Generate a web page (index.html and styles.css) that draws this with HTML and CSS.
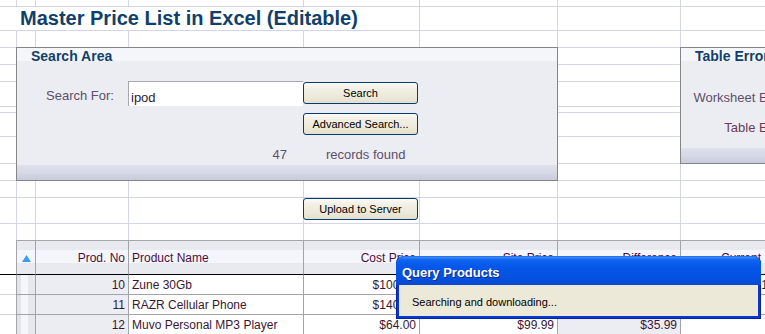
FILE: index.html
```html
<!DOCTYPE html>
<html>
<head>
<meta charset="utf-8">
<title>Master Price List</title>
<link rel="stylesheet" href="styles.css">
</head>
<body>
<div class="sheet">
  <div class="title-cell"><h1 class="title">Master Price List in Excel (Editable)</h1></div>

  <section class="panel search-panel">
    <h2 class="panel-title">Search Area</h2>
    <div class="search-grid">
      <label class="lbl" for="q">Search For:</label>
      <input id="q" class="search-input" value="ipod">
      <button class="xp-btn btn-search">Search</button>
      <button class="xp-btn btn-adv">Advanced Search...</button>
      <span class="count">47</span>
      <span class="found">records found</span>
    </div>
  </section>

  <section class="panel error-panel">
    <h2 class="panel-title">Table Errors</h2>
    <div class="err-grid">
      <span class="err-lbl err-ws">Worksheet Errors:</span>
      <span class="err-lbl err-tb">Table Errors:</span>
    </div>
  </section>

  <button class="xp-btn btn-upload">Upload to Server</button>

  <div class="table">
    <div class="th c0"></div>
    <div class="th c1"><svg class="sort" width="9" height="7" viewBox="0 0 9 7"><polygon points="4.5,0 9,7 0,7" fill="#3b9cf2"/></svg></div>
    <div class="th c2 r">Prod. No</div>
    <div class="th c3">Product Name</div>
    <div class="th c4 r">Cost Price</div>
    <div class="th c5 r">Site Price</div>
    <div class="th c6 r">Difference</div>
    <div class="th c7 r">Current</div>

    <div class="td first c0"></div>
    <div class="td first c1"></div>
    <div class="td first c2 r">10</div>
    <div class="td first c3">Zune 30Gb</div>
    <div class="td first c4 r">$100.00</div>
    <div class="td first c5 r">$149.99</div>
    <div class="td first c6 r">$49.99</div>
    <div class="td first c7 r">1</div>

    <div class="td c0"></div>
    <div class="td c1"></div>
    <div class="td c2 r">11</div>
    <div class="td c3">RAZR Cellular Phone</div>
    <div class="td c4 r">$140.00</div>
    <div class="td c5 r">$199.99</div>
    <div class="td c6 r">$59.99</div>
    <div class="td c7 r"></div>

    <div class="td c0"></div>
    <div class="td c1"></div>
    <div class="td c2 r">12</div>
    <div class="td c3">Muvo Personal MP3 Player</div>
    <div class="td c4 r">$64.00</div>
    <div class="td c5 r">$99.99</div>
    <div class="td c6 r">$35.99</div>
    <div class="td c7 r"></div>
  </div>
</div>

<div class="dialog">
  <div class="dialog-title">Query Products</div>
  <div class="dialog-body">Searching and downloading...</div>
</div>
</body>
</html>
```

FILE: styles.css
```css
* { box-sizing: border-box; margin: 0; padding: 0; }

html, body {
  width: 765px;
  height: 334px;
  overflow: hidden;
  background: #fff;
}

body {
  position: relative;
  font-family: "Liberation Sans", Arial, sans-serif;
  color: #3a1a34;
}

.sheet {
  --gl: #d3d4e7;
  width: 765px;
  height: 334px;
  overflow: hidden;
  display: grid;
  grid-template-columns: 16px 19px 93px 175px 116px 138px 123px 200px;
  grid-template-rows: 6px 24px 17px 17px 17px 25px 6px 24px 27px 17px 17px 26px 17px 34px 20px 20px 20px;
  background-color: #fff;
  background-image:
    linear-gradient(var(--gl), var(--gl)), linear-gradient(var(--gl), var(--gl)),
    linear-gradient(var(--gl), var(--gl)), linear-gradient(var(--gl), var(--gl)),
    linear-gradient(var(--gl), var(--gl)), linear-gradient(var(--gl), var(--gl)),
    linear-gradient(var(--gl), var(--gl)),
    linear-gradient(var(--gl), var(--gl)), linear-gradient(var(--gl), var(--gl)),
    linear-gradient(var(--gl), var(--gl)), linear-gradient(var(--gl), var(--gl)),
    linear-gradient(var(--gl), var(--gl)), linear-gradient(var(--gl), var(--gl)),
    linear-gradient(var(--gl), var(--gl)), linear-gradient(var(--gl), var(--gl)),
    linear-gradient(var(--gl), var(--gl)), linear-gradient(var(--gl), var(--gl)),
    linear-gradient(var(--gl), var(--gl)), linear-gradient(var(--gl), var(--gl));
  background-size:
    1px 240px, 1px 240px, 1px 240px, 1px 240px, 1px 240px, 1px 240px, 1px 240px,
    100% 1px, 100% 1px, 100% 1px, 100% 1px, 100% 1px, 100% 1px,
    100% 1px, 100% 1px, 100% 1px, 100% 1px, 100% 1px, 100% 1px;
  background-position:
    16px 0, 35px 0, 128px 0, 303px 0, 419px 0, 557px 0, 680px 0,
    0 6px, 0 30px, 0 47px, 0 64px, 0 81px, 0 106px,
    0 112px, 0 136px, 0 163px, 0 180px, 0 197px, 0 223px;
  background-repeat: no-repeat;
}

/* ---------- title ---------- */
.title-cell {
  grid-column: 1 / 6;
  grid-row: 2;
  margin-top: 1px;
  background: #fff;
  padding-left: 20px;
}

.title {
  font-size: 20px;
  line-height: 23px;
  font-weight: bold;
  color: #113f6b;
  white-space: nowrap;
}

/* ---------- panels ---------- */
.panel {
  border: 1px solid #858585;
  background:
    linear-gradient(#f5f6fa, #f5f6fa) 0 0 / 100% 13px no-repeat,
    linear-gradient(to bottom, #ecedf3 0, #ecedf3 calc(100% - 15px), #dfe2ec calc(100% - 15px), #d6d9e6 calc(100% - 8px), #c8cbdb 100%);
  overflow: hidden;
}

.panel-title {
  font-size: 14px;
  font-weight: bold;
  line-height: 16px;
  height: 16px;
  color: #113f6b;
  padding-left: 14px;
  white-space: nowrap;
}

.search-panel {
  grid-column: 2 / 7;
  grid-row: 4 / 11;
  margin-right: -1px;
  margin-bottom: -1px;
}

.search-grid {
  display: grid;
  grid-template-columns: 111px 175px 116px 1fr;
  grid-template-rows: 17px 25px 7px 22px 12px 16px;
  font-size: 13px;
  color: #5c4e6c;
}

.lbl {
  grid-column: 1;
  grid-row: 2;
  align-self: end;
  margin-bottom: 2px;
  padding-left: 29px;
  line-height: 16px;
}

.search-input {
  grid-column: 2;
  grid-row: 2;
  height: 25px;
  width: 175px;
  border: none;
  border-top: 1px solid #a7a7ae;
  border-left: 1px solid #a7a7ae;
  background: #fff;
  font: 13px/16px "Liberation Sans", Arial, sans-serif;
  color: #2c1a34;
  padding: 6px 0 0 2px;
  outline: none;
}

.xp-btn {
  width: 115px;
  height: 22px;
  border: 1px solid #0b3a6e;
  border-radius: 3px;
  background: linear-gradient(#fbfbf8 0, #f2f0e6 25%, #ece9d8 70%, #e3dfcd 100%);
  font: 11px/1 "Liberation Sans", Arial, sans-serif;
  color: #000;
  padding: 0;
}

.btn-search {
  grid-column: 3;
  grid-row: 2;
  margin-top: 1px;
}

.btn-adv {
  grid-column: 3;
  grid-row: 4;
}

.count {
  grid-column: 2;
  grid-row: 6;
  text-align: right;
  padding-right: 16px;
  line-height: 16px;
}

.found {
  grid-column: 3 / 5;
  grid-row: 6;
  padding-left: 23px;
  line-height: 16px;
  white-space: nowrap;
}

.error-panel {
  grid-column: 8 / 9;
  grid-row: 4 / 10;
  margin-bottom: -1px;
}

.err-grid {
  display: grid;
  grid-template-columns: 117px;
  grid-template-rows: 26px 16px 14px 16px;
  font-size: 13px;
  color: #5c4e6c;
}

.err-lbl {
  text-align: right;
  line-height: 16px;
  white-space: nowrap;
}

.err-ws { grid-row: 2; }
.err-tb { grid-row: 4; color: #6a3a58; }

.btn-upload {
  grid-column: 5;
  grid-row: 12;
  margin-top: 1px;
}

/* ---------- data table ---------- */
.table {
  grid-column: 1 / -1;
  grid-row: 14 / 18;
  display: grid;
  grid-template-columns: 16px 19px 93px 175px 116px 138px 123px 88px;
  grid-template-rows: 34px 20px 20px 20px;
  font-size: 12px;
}

.th, .td {
  white-space: nowrap;
  overflow: hidden;
  display: flex;
  align-items: center;
  padding: 0 3px;
  border-left: 1px solid #a3a3a8;
  border-top: 1px solid #a3a3a8;
}

.th {
  color: #4e0c3e;
  background: linear-gradient(#e9e9f0 0, #e9e9f0 9px, #f4f6fb 9px, #f4f6fb 22px, #e9e9f0 22px);
}

.th.c0 {
  background: #fff;
  border: none;
}

.th.c1 {
  justify-content: center;
  padding: 2px 0 0 0;
}

.th.c7 { padding-right: 7px; }

.td {
  color: #3a1632;
  background: #fff;
}

.td.c7 { padding-right: 0; }

.td.c0 {
  border-left: none;
  border-top-color: #d3d4e7;
}

.td.first {
  border-top-color: #000;
}

.td.c1 {
  background: linear-gradient(to right, #e3e3eb 0, #e3e3eb 4px, #f5f6fa 4px, #f5f6fa 11px, #e7e7ef 11px);
}

.td.c2, .td.c6 { background: #ececf3; }

.r { justify-content: flex-end; }

/* ---------- dialog ---------- */
.dialog {
  position: absolute;
  left: 396px;
  top: 256px;
  width: 365px;
  height: 63px;
  border-radius: 7px 7px 0 0;
  background: #0838d0;
  border: 1px solid #0020a8;
  border-top-color: #2a72e8;
  display: flex;
  flex-direction: column;
  z-index: 5;
}

.dialog-title {
  height: 28px;
  margin: 0 -1px;
  border-radius: 7px 7px 0 0;
  background: linear-gradient(#3c8cf6 0, #0f64ee 3px, #0558ea 9px, #0453e4 16px, #0550de 22px, #0a48d2 28px);
  color: #fff;
  font: bold 13px/28px "Liberation Sans", Arial, sans-serif;
  padding: 2px 0 0 6px;
  text-shadow: 1px 1px 0 #0a2a8a;
}

.dialog-body {
  flex: 1;
  margin: 0 2px 2px;
  background: #ece9d8;
  font: 11px/14px "Liberation Sans", Arial, sans-serif;
  color: #000;
  padding: 10px 0 0 13px;
}
```
